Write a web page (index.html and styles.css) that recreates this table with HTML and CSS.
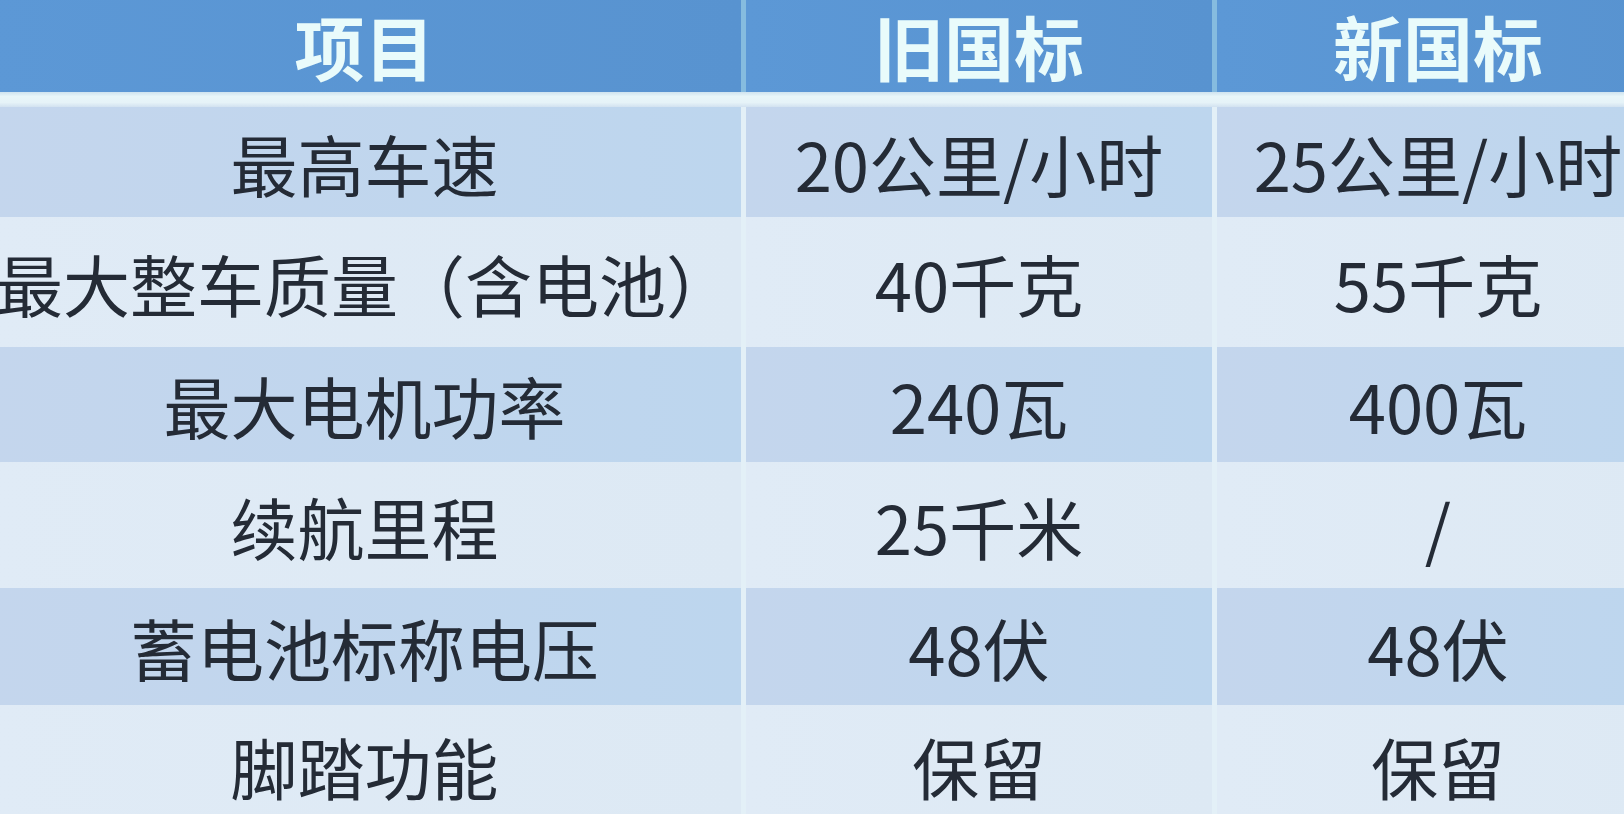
FILE: index.html
```html
<!DOCTYPE html>
<html lang="zh-CN">
<head>
<meta charset="utf-8">
<title>新旧国标对比</title>
<link rel="stylesheet" href="styles.css">
</head>
<body>
<div class="table">
  <div class="row head">
    <div class="cell">项目</div>
    <div class="cell">旧国标</div>
    <div class="cell">新国标</div>
  </div>
  <div class="sep"></div>
  <div class="row dark h1">
    <div class="cell">最高车速</div>
    <div class="cell">20公里/小时</div>
    <div class="cell">25公里/小时</div>
  </div>
  <div class="row light h2">
    <div class="cell">最大整车质量（含电池）</div>
    <div class="cell">40千克</div>
    <div class="cell">55千克</div>
  </div>
  <div class="row dark h3">
    <div class="cell">最大电机功率</div>
    <div class="cell">240瓦</div>
    <div class="cell">400瓦</div>
  </div>
  <div class="row light h4">
    <div class="cell">续航里程</div>
    <div class="cell">25千米</div>
    <div class="cell">/</div>
  </div>
  <div class="row dark h5">
    <div class="cell">蓄电池标称电压</div>
    <div class="cell">48伏</div>
    <div class="cell">48伏</div>
  </div>
  <div class="row light h6">
    <div class="cell">脚踏功能</div>
    <div class="cell">保留</div>
    <div class="cell">保留</div>
  </div>
</div>
</body>
</html>
```
FILE: styles.css
```css
html, body {
  margin: 0;
  padding: 0;
  width: 1624px;
  height: 814px;
  overflow: hidden;
  background: #deeaf5;
}
.table {
  margin-left: -12px;
  width: 1673px;
  font-family: "Noto Sans CJK SC", "Noto Sans", sans-serif;
  color: #242b36;
}
.row {
  display: grid;
  grid-template-columns: 753px 466px 442px;
  column-gap: 5px;
  background: #e3f0f7;
}
.cell {
  display: flex;
  align-items: center;
  justify-content: center;
  white-space: nowrap;
  font-size: 67px;
  line-height: 1.3;
  padding-top: 1px;
  box-sizing: border-box;
}
.head {
  height: 92px;
  background: #86bcdf;
}
.head .cell {
  background: linear-gradient(90deg, #5c98d6, #5893d0);
  color: #e9fbfb;
  font-weight: 700;
  font-size: 70px;
  line-height: 1.25;
  padding-top: 0;
}
.sep {
  height: 15px;
  background: linear-gradient(180deg, #cfe3ef 0, #e8f6f9 30%, #e6f3f8 70%, #d2e2f0 100%);
}
.dark .cell {
  background: linear-gradient(90deg, #c4d6ed, #bdd6ee);
}
.light .cell {
  background: linear-gradient(90deg, #e0ebf6, #dde9f4);
}
.h1 { height: 110px; }
.h2 { height: 130px; }
.h3 { height: 115px; }
.h4 { height: 126px; }
.h5 { height: 117px; }
.h6 { height: 120px; }
```
